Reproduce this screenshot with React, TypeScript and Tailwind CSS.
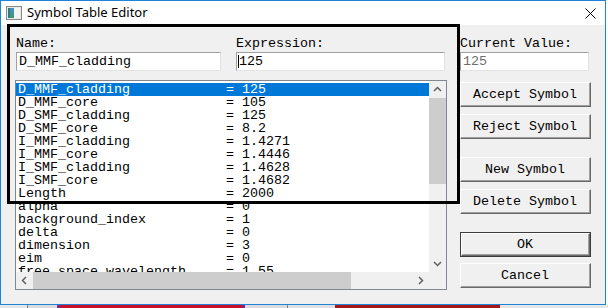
import React from "react";

type Row = { name: string; value: string };

const rows: Row[] = [
  { name: "D_MMF_cladding", value: "125" },
  { name: "D_MMF_core", value: "105" },
  { name: "D_SMF_cladding", value: "125" },
  { name: "D_SMF_core", value: "8.2" },
  { name: "I_MMF_cladding", value: "1.4271" },
  { name: "I_MMF_core", value: "1.4446" },
  { name: "I_SMF_cladding", value: "1.4628" },
  { name: "I_SMF_core", value: "1.4682" },
  { name: "Length", value: "2000" },
  { name: "alpha", value: "0" },
  { name: "background_index", value: "1" },
  { name: "delta", value: "0" },
  { name: "dimension", value: "3" },
  { name: "eim", value: "0" },
  { name: "free_space_wavelength", value: "1.55" },
];

const Chevron = ({ dir }: { dir: "up" | "down" | "left" | "right" }) => {
  const points = {
    up: "1,6 4.5,2.5 8,6",
    down: "1,3 4.5,6.5 8,3",
    left: "6,1 2.5,4.5 6,8",
    right: "3,1 6.5,4.5 3,8",
  }[dir];
  return (
    <svg width="9" height="9" viewBox="0 0 9 9">
      <polyline points={points} fill="none" stroke="#606060" strokeWidth="1.5" />
    </svg>
  );
};

interface FieldProps {
  text: string;
  className?: string;
  disabled?: boolean;
  caret?: boolean;
}

const Field = ({ text, className = "", disabled, caret }: FieldProps) => (
  <div
    className={`h-[19px] flex items-center bg-white border border-t-[#a0a0a0] border-l-[#a0a0a0] border-b-[#e3e3e3] border-r-[#e3e3e3] whitespace-pre leading-[15px] ${className}`}
  >
    {caret && <span className="w-px h-[13px] bg-black" />}
    <span className={disabled ? "text-[#6d6d6d]" : "text-black"}>{text}</span>
  </div>
);

interface ButtonProps {
  label: string;
  className?: string;
  isDefault?: boolean;
}

const WinButton = ({ label, className = "", isDefault }: ButtonProps) => (
  <div className={`w-[131px] h-[25px] ${isDefault ? "border border-[#3c3c3c]" : ""} ${className}`}>
    <div className="h-full border border-t-white border-l-white border-b-[#696969] border-r-[#696969]">
      <div className="h-full flex items-center justify-center border-b border-r border-b-[#a0a0a0] border-r-[#a0a0a0] bg-[#f0f0f0] leading-[15px] whitespace-pre">
        {label}
      </div>
    </div>
  </div>
);

const ListBox = () => (
  <div className="mt-[9px] w-[432px] h-[210px] flex flex-col border border-[#828790] bg-white">
    <div className="flex h-[191px]">
      <div className="flex-1 overflow-hidden pt-[2px]">
        {rows.map((row, i) => (
          <div
            key={row.name}
            className={`h-[13px] leading-[13px] pl-[2px] whitespace-pre ${
              i === 0 ? "bg-[#0078d7] text-white" : "text-black"
            }`}
          >
            {row.name.padEnd(26) + "= " + row.value}
          </div>
        ))}
      </div>
      <div className="w-[17px] flex flex-col bg-[#f0f0f0]">
        <div className="h-[17px] flex items-center justify-center">
          <Chevron dir="up" />
        </div>
        <div className="h-[86px] bg-[#cdcdcd]" />
        <div className="flex-1" />
        <div className="h-[17px] flex items-center justify-center">
          <Chevron dir="down" />
        </div>
      </div>
    </div>
    <div className="flex h-[17px] bg-[#f0f0f0]">
      <div className="w-[17px] flex items-center justify-center">
        <Chevron dir="left" />
      </div>
      <div className="w-[318px] bg-[#cdcdcd]" />
      <div className="flex-1" />
      <div className="w-[17px] flex items-center justify-center">
        <Chevron dir="right" />
      </div>
      <div className="w-[17px]" />
    </div>
  </div>
);

const TitleBar = () => (
  <div className="h-[24px] flex items-start bg-white">
    <svg className="ml-[5px] mt-[5px]" width="16" height="14" viewBox="0 0 16 14">
      <defs>
        <linearGradient id="ic" x1="0" y1="0" x2="0" y2="1">
          <stop offset="0" stopColor="#4a8fc4" />
          <stop offset="1" stopColor="#3f9a6a" />
        </linearGradient>
      </defs>
      <rect x="0.5" y="0.5" width="15" height="13" fill="#e8e8e8" stroke="#8a8a8a" />
      <rect x="2" y="2" width="6" height="10" fill="url(#ic)" />
      <rect x="8" y="2" width="6" height="10" fill="#f4f4f4" />
      <rect x="2" y="2" width="2" height="10" fill="#2f7a8e" />
    </svg>
    <span className="ml-[5px] mt-[3px] font-['Noto_Sans',sans-serif] text-[13px] leading-[16px] text-black">
      Symbol Table Editor
    </span>
    <svg className="ml-auto mr-[9px] mt-[7px]" width="11" height="11" viewBox="0 0 11 11">
      <path d="M0.5 0.5 L10.5 10.5 M10.5 0.5 L0.5 10.5" stroke="#000" strokeWidth="1" />
    </svg>
  </div>
);

const App = () => {
  return (
    <div className="relative w-[608px] h-[308px] overflow-hidden bg-white flex flex-col font-['Liberation_Mono','Courier_New',monospace] text-[13.33px] text-black">
      <div className="flex h-[305px]">
        <div className="w-[606px] h-full flex flex-col border border-[#1f84d8]">
          <TitleBar />
          <div className="flex-1 flex bg-[#f0f0f0] pl-[14px] pt-[11px]">
            <div className="w-[432px] flex flex-col">
              <div className="flex gap-[15px] pl-px">
                <div className="w-[205px] flex flex-col">
                  <div className="h-[15px] leading-[15px] mb-px whitespace-pre">Name:</div>
                  <Field text="D_MMF_cladding" className="pl-[2px]" />
                </div>
                <div className="w-[209px] flex flex-col">
                  <div className="h-[15px] leading-[15px] mb-px whitespace-pre">Expression:</div>
                  <Field text="125" caret className="pl-[1px]" />
                </div>
              </div>
              <ListBox />
            </div>
            <div className="ml-[13px] w-[131px] flex flex-col">
              <div className="h-[15px] leading-[15px] mb-px whitespace-pre">Current Value:</div>
              <Field text="125" disabled className="w-[129px] pl-[2px]" />
              <WinButton label="Accept Symbol" className="mt-[11px]" />
              <WinButton label="Reject Symbol" className="mt-[7px]" />
              <WinButton label="New Symbol" className="mt-[18px]" />
              <WinButton label="Delete Symbol" className="mt-[7px]" />
              <WinButton label="OK" isDefault className="mt-[18px]" />
              <WinButton label="Cancel" className="mt-[6px]" />
            </div>
          </div>
        </div>
        <div className="flex-1 bg-white" />
      </div>
      <div className="flex h-[3px]">
        <div className="w-[27px] bg-[#e6e6e6]" />
        <div className="w-px bg-[#808080]" />
        <div className="w-[29px] bg-[#dcdcdc]" />
        <div className="w-[3px] bg-[#7a2a8a]" />
        <div className="w-[182px] bg-[#c8102e]" />
        <div className="w-[3px] bg-[#7a2a8a]" />
        <div className="w-[42px] bg-[#dcdcdc]" />
        <div className="w-px bg-[#808080]" />
        <div className="w-[47px] bg-[#e0e0e0]" />
        <div className="w-[165px] bg-[#a31818]" />
        <div className="flex-1 bg-[#e6e6e6]" />
      </div>
      <div className="absolute left-[7px] top-[24px] w-[453px] h-[180px] border-[3px] border-black pointer-events-none" />
    </div>
  );
};

export default App;
